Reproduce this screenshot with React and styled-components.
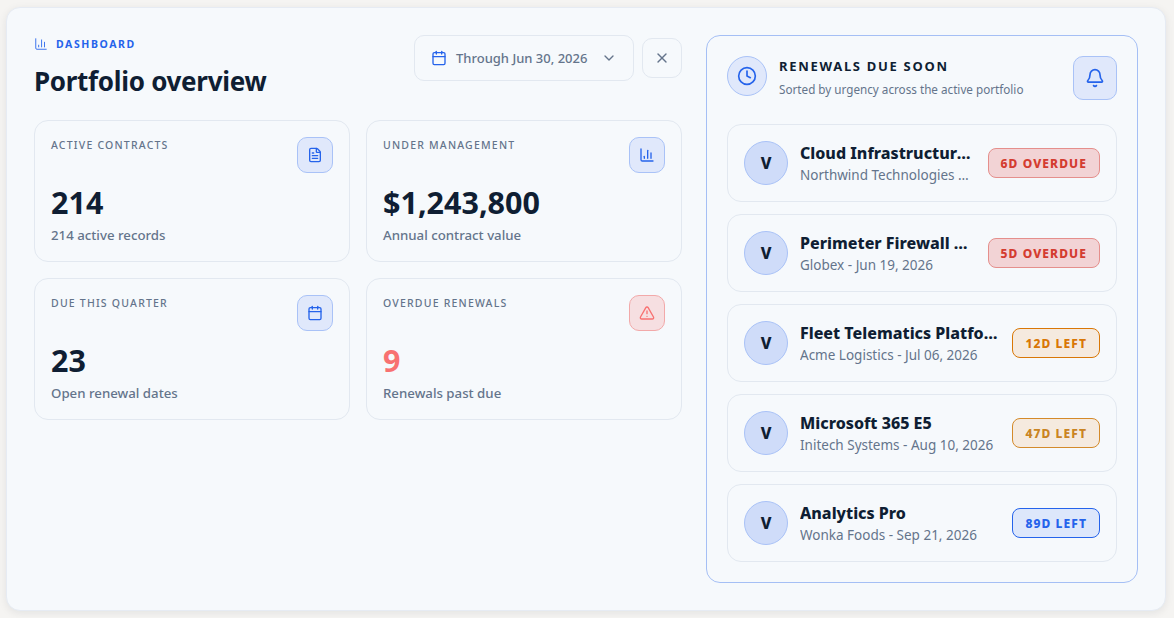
import React from "react";
import styled, { createGlobalStyle } from "styled-components";
import {
  AlertTriangle,
  BarChart3,
  Bell,
  Calendar,
  ChevronDown,
  Clock,
  FileText,
  X,
} from "lucide-react";

const GlobalStyle = createGlobalStyle`
  * { box-sizing: border-box; }
  html, body { margin: 0; height: 100%; }
  body {
    background: #f5f4f2;
    font-family: "Noto Sans", "Open Sans", sans-serif;
    overflow: hidden;
  }
`;

const Page = styled.div`
  padding: 7px 8px 7px 6px;
`;

const Shell = styled.div`
  display: flex;
  gap: 24px;
  height: 604px;
  padding: 27px;
  background: #f6f9fc;
  border: 1px solid #e6ebf3;
  border-radius: 14px;
  box-shadow: 0 2px 8px rgba(15, 23, 42, 0.08);
`;

const Main = styled.section`
  width: 648px;
  flex: none;
`;

const Header = styled.header`
  display: flex;
  justify-content: space-between;
  align-items: flex-start;
  height: 85px;
`;

const Eyebrow = styled.div`
  display: flex;
  align-items: center;
  gap: 8px;
  color: #2563eb;
  font-size: 10.5px;
  font-weight: 700;
  letter-spacing: 1.6px;
  text-transform: uppercase;
  line-height: 16px;
  margin-top: 1px;
`;

const Title = styled.h1`
  margin: 11px 0 0;
  color: #0f1e33;
  font-size: 26px;
  line-height: 36px;
  font-weight: 700;
  letter-spacing: -0.3px;
`;

const Actions = styled.div`
  display: flex;
  align-items: center;
  gap: 8px;
`;

const DateButton = styled.button`
  display: flex;
  align-items: center;
  gap: 9px;
  width: 220px;
  height: 46px;
  padding: 0 12px 0 16px;
  background: transparent;
  border: 1px solid #e2e8f0;
  border-radius: 10px;
  color: #64748b;
  font: 500 13px "Noto Sans", sans-serif;
  white-space: nowrap;
  svg { flex: none; }
  svg:first-child { color: #2563eb; }
  svg:last-child { margin-left: 5px; }
`;

const CloseButton = styled.button`
  display: grid;
  place-items: center;
  width: 40px;
  height: 40px;
  padding: 0;
  background: transparent;
  border: 1px solid #e2e8f0;
  border-radius: 10px;
  color: #64748b;
`;

const Stats = styled.div`
  display: grid;
  grid-template-columns: 1fr 1fr;
  grid-auto-rows: 142px;
  gap: 16px;
`;

const StatCard = styled.article`
  display: flex;
  flex-direction: column;
  padding: 16px;
  border: 1px solid #e2e8f0;
  border-radius: 14px;
`;

const StatTop = styled.div`
  display: flex;
  justify-content: space-between;
  align-items: flex-start;
  height: 46px;
`;

const StatLabel = styled.div`
  color: #64748b;
  font-size: 10.5px;
  font-weight: 500;
  letter-spacing: 1.2px;
  line-height: 16px;
  text-transform: uppercase;
`;

const IconBox = styled.div`
  display: grid;
  place-items: center;
  width: 36px;
  height: 36px;
  border-radius: 10px;
  border: 1px solid ${({ $danger }) => ($danger ? "#f2a9a9" : "#a9c2f7")};
  background: ${({ $danger }) => ($danger ? "#f6dfe1" : "#e0e8fb")};
  color: ${({ $danger }) => ($danger ? "#f87171" : "#2563eb")};
`;

const StatValue = styled.div`
  color: ${({ $danger }) => ($danger ? "#f87171" : "#0f1e33")};
  font-size: 30.5px;
  line-height: 40px;
  font-weight: 700;
`;

const StatNote = styled.div`
  margin-top: 3px;
  color: #64748b;
  font-size: 13.25px;
  font-weight: 500;
  line-height: 20px;
`;

const Panel = styled.aside`
  width: 432px;
  flex: none;
  align-self: flex-start;
  padding: 20px;
  border: 1px solid #a5bff5;
  border-radius: 14px;
`;

const PanelHead = styled.div`
  display: flex;
  align-items: flex-start;
  gap: 12px;
  height: 68px;
`;

const ClockBadge = styled.div`
  display: grid;
  place-items: center;
  flex: none;
  width: 40px;
  height: 40px;
  border-radius: 50%;
  border: 1px solid #a9c2f7;
  background: #e0e8fb;
  color: #2563eb;
`;

const PanelText = styled.div`
  flex: 1;
`;

const PanelTitle = styled.h2`
  margin: 0;
  color: #0f1e33;
  font-size: 13px;
  line-height: 20px;
  font-weight: 700;
  letter-spacing: 1.7px;
  text-transform: uppercase;
`;

const PanelSub = styled.p`
  margin: 5px 0 0;
  color: #64748b;
  font-size: 11.7px;
  line-height: 16px;
`;

const BellButton = styled.button`
  display: grid;
  place-items: center;
  width: 44px;
  height: 44px;
  padding: 0;
  border: 1px solid #a9c2f7;
  border-radius: 10px;
  background: #e0e8fb;
  color: #2563eb;
`;

const List = styled.div`
  display: flex;
  flex-direction: column;
  gap: 12px;
`;

const Row = styled.div`
  display: flex;
  align-items: center;
  height: 78px;
  padding: 0 16px;
  border: 1px solid #e2e8f0;
  border-radius: 14px;
`;

const Avatar = styled.div`
  display: grid;
  place-items: center;
  flex: none;
  width: 44px;
  height: 44px;
  margin-right: 12px;
  border-radius: 50%;
  border: 1px solid #a9c2f7;
  background: #cfdcf9;
  color: #0f1e33;
  font-size: 16px;
  font-weight: 800;
`;

const RowText = styled.div`
  flex: 1;
  min-width: 0;
  margin-right: 12px;
  padding-top: 2px;
`;

const RowTitle = styled.div`
  color: #0f1e33;
  font-size: 16px;
  line-height: 21px;
  font-weight: 800;
  white-space: nowrap;
  overflow: hidden;
  text-overflow: ellipsis;
`;

const RowSub = styled.div`
  margin-top: 1px;
  padding-right: 4px;
  color: #64748b;
  font-size: 13.5px;
  line-height: 20px;
  white-space: nowrap;
  overflow: hidden;
  text-overflow: ellipsis;
`;

const tones = {
  red: { color: "#d43c30", bg: "#f2d3d5", border: "#e58f8c" },
  orange: { color: "#d97706", bg: "#f5eadf", border: "#d97706" },
  amber: { color: "#ca8422", bg: "#f5eadf", border: "#d48a2a" },
  blue: { color: "#2563eb", bg: "#dde7fb", border: "#2563eb" },
};

const Badge = styled.span`
  flex: none;
  height: 30px;
  padding: 0 12px;
  border-radius: 8px;
  border: 1px solid ${({ $tone }) => tones[$tone].border};
  background: ${({ $tone }) => tones[$tone].bg};
  color: ${({ $tone }) => tones[$tone].color};
  font-size: 12px;
  font-weight: 800;
  line-height: 29px;
  letter-spacing: 1.1px;
  text-transform: uppercase;
`;

const stats = [
  { label: "Active contracts", value: "214", note: "214 active records", icon: FileText },
  { label: "Under management", value: "$1,243,800", note: "Annual contract value", icon: BarChart3 },
  { label: "Due this quarter", value: "23", note: "Open renewal dates", icon: Calendar },
  { label: "Overdue renewals", value: "9", note: "Renewals past due", icon: AlertTriangle, danger: true },
];

const renewals = [
  { title: "Cloud Infrastructure Suite", sub: "Northwind Technologies - Jun 18, 2026", badge: "6d overdue", tone: "red" },
  { title: "Perimeter Firewall Renewal", sub: "Globex - Jun 19, 2026", badge: "5d overdue", tone: "red" },
  { title: "Fleet Telematics Platform Plus", sub: "Acme Logistics - Jul 06, 2026", badge: "12d left", tone: "orange" },
  { title: "Microsoft 365 E5", sub: "Initech Systems - Aug 10, 2026", badge: "47d left", tone: "amber" },
  { title: "Analytics Pro", sub: "Wonka Foods - Sep 21, 2026", badge: "89d left", tone: "blue" },
];

export default function App() {
  return (
    <Page>
      <GlobalStyle />
      <Shell>
        <Main>
          <Header>
            <div>
              <Eyebrow>
                <BarChart3 size={14} strokeWidth={1.5} />
                Dashboard
              </Eyebrow>
              <Title>Portfolio overview</Title>
            </div>
            <Actions>
              <DateButton>
                <Calendar size={16} />
                Through Jun 30, 2026
                <ChevronDown size={16} />
              </DateButton>
              <CloseButton>
                <X size={16} />
              </CloseButton>
            </Actions>
          </Header>
          <Stats>
            {stats.map(({ label, value, note, icon: Icon, danger }) => (
              <StatCard key={label}>
                <StatTop>
                  <StatLabel>{label}</StatLabel>
                  <IconBox $danger={danger}>
                    <Icon size={16} />
                  </IconBox>
                </StatTop>
                <StatValue $danger={danger}>{value}</StatValue>
                <StatNote>{note}</StatNote>
              </StatCard>
            ))}
          </Stats>
        </Main>
        <Panel>
          <PanelHead>
            <ClockBadge>
              <Clock size={20} />
            </ClockBadge>
            <PanelText>
              <PanelTitle>Renewals due soon</PanelTitle>
              <PanelSub>Sorted by urgency across the active portfolio</PanelSub>
            </PanelText>
            <BellButton>
              <Bell size={20} />
            </BellButton>
          </PanelHead>
          <List>
            {renewals.map((r) => (
              <Row key={r.title}>
                <Avatar>V</Avatar>
                <RowText>
                  <RowTitle>{r.title}</RowTitle>
                  <RowSub>{r.sub}</RowSub>
                </RowText>
                <Badge $tone={r.tone}>{r.badge}</Badge>
              </Row>
            ))}
          </List>
        </Panel>
      </Shell>
    </Page>
  );
}
